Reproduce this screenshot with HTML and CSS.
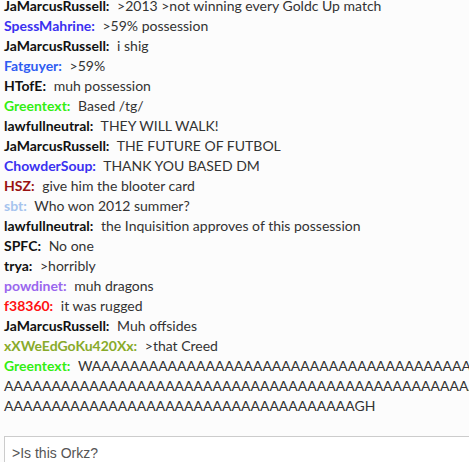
FILE: index.html
```html
<!DOCTYPE html>
<html lang="en">
<head>
    <meta charset="UTF-8">
    <title>Chat</title>
    <link rel="stylesheet" href="styles.css">
</head>
<body>
    <div class="chat">
        <div class="log">
            <div class="msg"><span class="name">JaMarcusRussell:</span> <span class="text">&gt;2013 &gt;not winning every Goldc Up match</span></div>
            <div class="msg"><span class="name blue">SpessMahrine:</span> <span class="text">&gt;59% possession</span></div>
            <div class="msg"><span class="name">JaMarcusRussell:</span> <span class="text">i shig</span></div>
            <div class="msg"><span class="name sky">Fatguyer:</span> <span class="text">&gt;59%</span></div>
            <div class="msg"><span class="name">HTofE:</span> <span class="text">muh possession</span></div>
            <div class="msg"><span class="name lime">Greentext:</span> <span class="text">Based /tg/</span></div>
            <div class="msg"><span class="name">lawfullneutral:</span> <span class="text">THEY WILL WALK!</span></div>
            <div class="msg"><span class="name">JaMarcusRussell:</span> <span class="text">THE FUTURE OF FUTBOL</span></div>
            <div class="msg"><span class="name blue">ChowderSoup:</span> <span class="text">THANK YOU BASED DM</span></div>
            <div class="msg"><span class="name maroon">HSZ:</span> <span class="text">give him the blooter card</span></div>
            <div class="msg"><span class="name pale">sbt:</span> <span class="text">Who won 2012 summer?</span></div>
            <div class="msg"><span class="name">lawfullneutral:</span> <span class="text">the Inquisition approves of this possession</span></div>
            <div class="msg"><span class="name">SPFC:</span> <span class="text">No one</span></div>
            <div class="msg"><span class="name">trya:</span> <span class="text">&gt;horribly</span></div>
            <div class="msg"><span class="name violet">powdinet:</span> <span class="text">muh dragons</span></div>
            <div class="msg"><span class="name red">f38360:</span> <span class="text">it was rugged</span></div>
            <div class="msg"><span class="name">JaMarcusRussell:</span> <span class="text">Muh offsides</span></div>
            <div class="msg"><span class="name olive">xXWeEdGoKu420Xx:</span> <span class="text">&gt;that Creed</span></div>
            <div class="msg"><span class="name lime">Greentext:</span> <span class="text">WAAAAAAAAAAAAAAAAAAAAAAAAAAAAAAAAAAAAAAAAAAAAAAAAAAAAAAAAAAAAAAAAAAAAAAAAAAAAAAAAAAAAAAAAAAAAAAAAAAAAAAAAAAAAAAAAAAAAAAAAAAAAAAAAAAAAAAAGH</span></div>
        </div>
    </div>
    <div class="compose">
        <input class="input" type="text" value="&gt;Is this Orkz?">
    </div>
</body>
</html>
```

FILE: styles.css
```css
* {
    box-sizing: border-box;
    margin: 0;
    padding: 0;
}

body {
    width: 520px;
    background: #fcfcfc;
    font-family: 'Lato', 'Open Sans', sans-serif;
    font-size: 14px;
    color: #333333;
    overflow: hidden;
}

.chat {
    height: 426px;
    overflow: hidden;
    display: flex;
    flex-direction: column;
    justify-content: flex-end;
    padding: 0 4px 10px 4px;
}

.msg {
    line-height: 20px;
    word-break: break-all;
}

.name {
    font-weight: bold;
    color: #111111;
    margin-right: 4px;
}

.blue { color: #3a30f0; }
.sky { color: #2f5cf2; }
.lime { color: #33ee11; }
.maroon { color: #991111; }
.pale { color: #a6c4ee; }
.violet { color: #9a66ee; }
.red { color: #ff1111; }
.olive { color: #88aa2a; }

.compose {
    padding: 10px 0 0 4px;
}

.input {
    display: block;
    width: 510px;
    height: 34px;
    border: 1px solid #cccccc;
    background: #ffffff;
    padding: 0 7px;
    font-family: 'Liberation Sans', Arial, sans-serif;
    font-size: 14px;
    color: #555555;
    outline: none;
}
```
